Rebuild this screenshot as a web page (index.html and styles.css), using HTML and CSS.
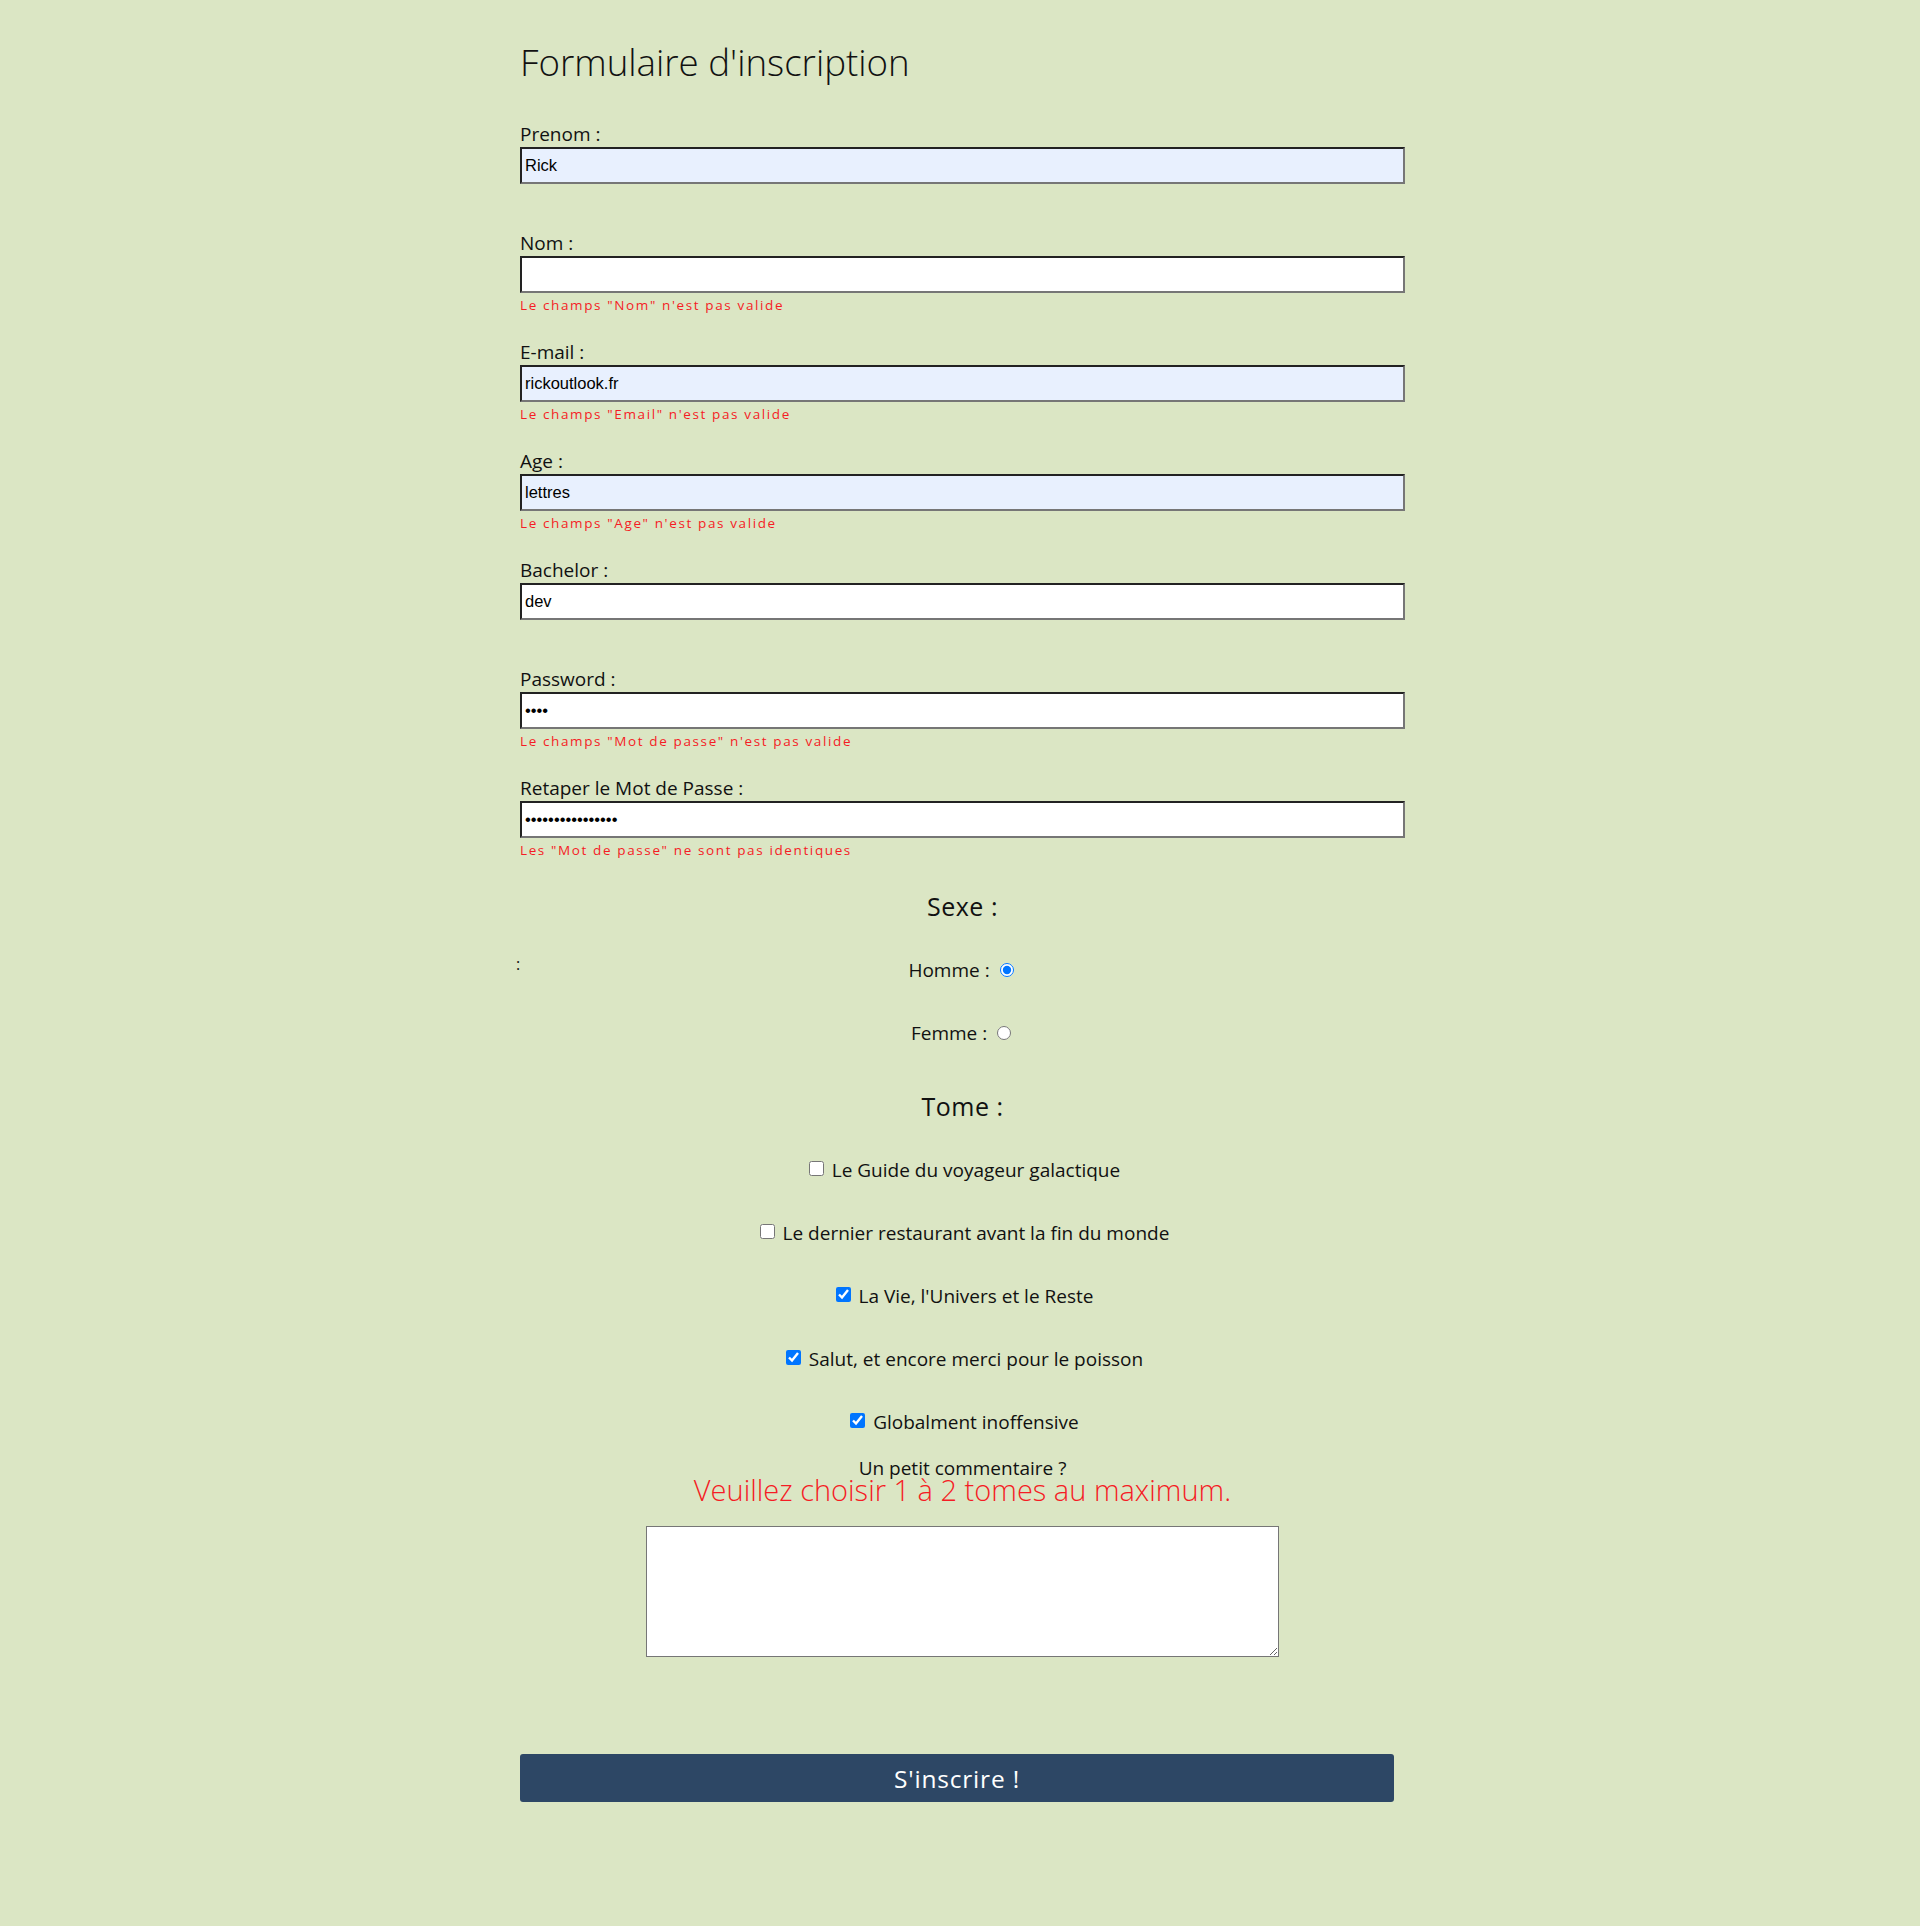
FILE: index.html
```html
<!DOCTYPE html>
<html lang="fr">
<head>
<meta charset="utf-8">
<title>Formulaire d'inscription</title>
<link rel="stylesheet" href="styles.css">
</head>
<body>
<main class="page">
  <h1 class="title">Formulaire d'inscription</h1>
  <form class="form">
    <div class="field">
      <label class="label" for="prenom">Prenom :</label>
      <input class="input autofilled" id="prenom" type="text" value="Rick">
      <p class="error"></p>
    </div>
    <div class="field">
      <label class="label" for="nom">Nom :</label>
      <input class="input" id="nom" type="text" value="">
      <p class="error">Le champs "Nom" n'est pas valide</p>
    </div>
    <div class="field">
      <label class="label" for="email">E-mail :</label>
      <input class="input autofilled" id="email" type="text" value="rickoutlook.fr">
      <p class="error">Le champs "Email" n'est pas valide</p>
    </div>
    <div class="field">
      <label class="label" for="age">Age :</label>
      <input class="input autofilled" id="age" type="text" value="lettres">
      <p class="error">Le champs "Age" n'est pas valide</p>
    </div>
    <div class="field">
      <label class="label" for="bachelor">Bachelor :</label>
      <input class="input" id="bachelor" type="text" value="dev">
      <p class="error"></p>
    </div>
    <div class="field">
      <label class="label" for="password">Password :</label>
      <input class="input" id="password" type="password" value="abcd">
      <p class="error">Le champs "Mot de passe" n'est pas valide</p>
    </div>
    <div class="field">
      <label class="label" for="password2">Retaper le Mot de Passe :</label>
      <input class="input" id="password2" type="password" value="abcdefghijklmnop">
      <p class="error">Les "Mot de passe" ne sont pas identiques</p>
    </div>

    <section class="group">
      <h2 class="group-title">Sexe :</h2>
      <div class="option option-grid">
        <span class="stray">:</span>
        <label class="option-label">Homme : <input class="radio" type="radio" name="sexe" checked></label>
        <span></span>
      </div>
      <div class="option">
        <label class="option-label">Femme : <input class="radio" type="radio" name="sexe"></label>
      </div>
    </section>

    <section class="group group-tome">
      <h2 class="group-title">Tome :</h2>
      <div class="option"><label class="option-label"><input class="check" type="checkbox"> Le Guide du voyageur galactique</label></div>
      <div class="option"><label class="option-label"><input class="check" type="checkbox"> Le dernier restaurant avant la fin du monde</label></div>
      <div class="option"><label class="option-label"><input class="check" type="checkbox" checked> La Vie, l'Univers et le Reste</label></div>
      <div class="option"><label class="option-label"><input class="check" type="checkbox" checked> Salut, et encore merci pour le poisson</label></div>
      <div class="option"><label class="option-label"><input class="check" type="checkbox" checked> Globalment inoffensive</label></div>
    </section>

    <div class="comment">
      <label class="comment-label" for="comment">Un petit commentaire ?</label>
      <p class="comment-error">Veuillez choisir 1 à 2 tomes au maximum.</p>
      <textarea class="textarea" id="comment"></textarea>
    </div>

    <button class="submit" type="button">S'inscrire !</button>
  </form>
</main>
</body>
</html>
```
FILE: styles.css
```css
html {
  background: #dbe6c4;
}

body {
  margin: 0;
  background: #dbe6c4;
  font-family: "Open Sans", "Noto Sans", sans-serif;
  color: #111;
}

.page {
  width: 885px;
  margin: 0 auto;
  padding: 38px 0 0 5px;
}

.title {
  margin: 0 0 36px;
  font-size: 36.7px;
  font-weight: 300;
  line-height: 48px;
}

.form {
  margin: 0;
}

.field {
  display: flex;
  flex-direction: column;
}

.label {
  display: block;
  font-size: 19px;
  line-height: 24px;
  margin-bottom: 1px;
}

.input {
  box-sizing: border-box;
  width: 885px;
  height: 37px;
  margin: 0;
  padding: 0 3px;
  border: 2px solid;
  border-color: #222 #767676 #767676 #222;
  background: #fff;
  color: #000;
  font-family: "Liberation Sans", Arial, sans-serif;
  font-size: 16.5px;
  outline: none;
}

.input.autofilled {
  background: #e8f0fe;
}

.error {
  margin: 2px 0 25px;
  min-height: 20px;
  font-size: 13.5px;
  line-height: 20px;
  letter-spacing: 1.62px;
  color: #f51c24;
}

.group {
  display: flex;
  flex-direction: column;
}

.group-title {
  margin: 5px 0 0;
  font-size: 25px;
  font-weight: 400;
  line-height: 32px;
  text-align: center;
  letter-spacing: 0.5px;
}

.group-tome .group-title {
  margin-top: 44px;
}

.option {
  margin-top: 37px;
  font-size: 19px;
  line-height: 26px;
  text-align: center;
}

.group-title + .option {
  margin-top: 35px;
}

.option-grid {
  display: grid;
  grid-template-columns: 1fr auto 1fr;
}

.stray {
  justify-self: start;
  align-self: start;
  margin-left: -4px;
  line-height: 14px;
  font-size: 16px;
}

.radio {
  width: 14px;
  height: 14px;
}

.check {
  width: 15px;
  height: 15px;
  vertical-align: 1px;
}

.comment {
  margin-top: 23px;
  text-align: center;
}

.comment-label {
  display: block;
  font-size: 19px;
  line-height: 20px;
}

.comment-error {
  margin: 0;
  font-size: 29px;
  font-weight: 300;
  line-height: 24px;
  color: #f51c24;
}

.textarea {
  display: block;
  box-sizing: border-box;
  width: 633px;
  height: 131px;
  margin: 24px auto 0;
  border: 1px solid #767676;
  background: #fff;
}

.submit {
  display: block;
  width: 874px;
  height: 48px;
  margin: 97px 0 0;
  padding: 0;
  border: 0;
  border-radius: 3px;
  background: #2d4765;
  color: #fff;
  font-family: "Open Sans", "Noto Sans", sans-serif;
  font-size: 24.5px;
  letter-spacing: 0.8px;
}
```
